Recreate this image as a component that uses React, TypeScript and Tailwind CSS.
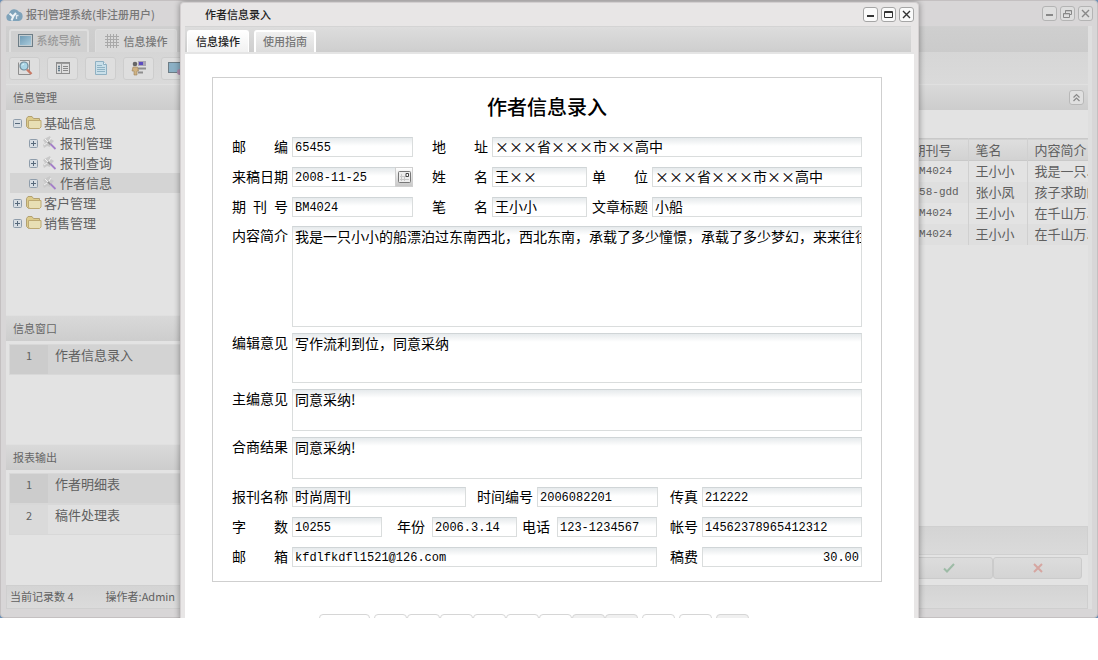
import type { ReactNode } from "react";

const UI_FONT = "font-['Noto_Sans_CJK_SC',sans-serif]";

const TREE = [
  { label: "基础信息", level: 0, open: true, selected: false },
  { label: "报刊管理", level: 1, open: false, selected: false },
  { label: "报刊查询", level: 1, open: false, selected: false },
  { label: "作者信息", level: 1, open: false, selected: true },
  { label: "客户管理", level: 0, open: false, selected: false },
  { label: "销售管理", level: 0, open: false, selected: false },
];

const ROWS = [
  { issue: "BM4024", author: "王小小", intro: "我是一只..." },
  { issue: "258-gdd", author: "张小凤", intro: "孩子求助的" },
  { issue: "BM4024", author: "王小小", intro: "在千山万..." },
  { issue: "BM4024", author: "王小小", intro: "在千山万..." },
];

const PAGER = [
  { name: "记录", className: "w-[51px] mr-1" },
  { name: "首页", className: "w-[33px]" },
  { name: "上一页", className: "w-[33px]" },
  { name: "下一页", className: "w-[33px]" },
  { name: "末页", className: "w-[33px]" },
  { name: "新增", className: "w-[33px]" },
  { name: "修改", className: "w-[33px]" },
  { name: "保存", className: "w-[33px] bg-[#f0f0f0]" },
  { name: "取消", className: "w-[33px] bg-[#f0f0f0]" },
  { name: "查找", className: "w-[33px] ml-1" },
  { name: "打印", className: "w-[33px] ml-1" },
  { name: "退出", className: "w-[33px] ml-1 bg-[#f0f0f0]" },
];

function CloudLogo() {
  return (
    <svg width="17" height="14" viewBox="0 0 17 14" aria-hidden="true">
      <path
        d="M4 13a3.8 3.8 0 0 1-1-7.4A5.5 5.5 0 0 1 13 3.8 4.7 4.7 0 0 1 12.8 13z"
        fill="#7fa3ba"
      />
      <path d="M3.500 5.500l3.500 3L10 5M7.500 8L5.500 12.500" stroke="#eef3f6" strokeWidth="2" fill="none" />
      <path d="M12.500 7.500h-2v3.500" stroke="#dfe8ee" strokeWidth="1.300" fill="none" />
    </svg>
  );
}

function MonitorIcon() {
  return (
    <svg width="15" height="13" viewBox="0 0 15 13" aria-hidden="true">
      <defs>
        <linearGradient id="screen" x1="0" y1="0" x2="1" y2="1">
          <stop offset="0" stopColor="#6f9bb5" />
          <stop offset="1" stopColor="#a9cbdc" />
        </linearGradient>
      </defs>
      <rect x=".5" y=".5" width="14" height="12" fill="#c3ccd0" stroke="#6d7d86" />
      <rect x="2" y="2" width="11" height="9" fill="url(#screen)" />
    </svg>
  );
}

function GridIcon() {
  return (
    <svg width="14" height="14" viewBox="0 0 14 14" aria-hidden="true">
      <path
        d="M2.500 0v14M5.500 0v14M8.500 0v14M11.500 0v14M0 2.500h14M0 5.500h14M0 8.500h14M0 11.500h14"
        stroke="#a9a9a9"
        fill="none"
      />
    </svg>
  );
}

function SearchIcon() {
  return (
    <svg width="16" height="16" viewBox="0 0 16 16" aria-hidden="true">
      <path d="M1.500 2.500v12h12M3 .5h9.500v12" stroke="#8e8e8e" fill="none" />
      <circle cx="7" cy="6" r="4" fill="#a9d5e6" stroke="#6f8b9a" strokeWidth="1.200" />
      <path d="M5 5.500a2.500 2.500 0 0 1 2-1.500" stroke="#e5f5fb" fill="none" />
      <path d="M10 9.500l4.500 4.500" stroke="#c87965" strokeWidth="2.400" />
    </svg>
  );
}

function ListIcon() {
  return (
    <svg width="14" height="12" viewBox="0 0 14 12" aria-hidden="true">
      <rect x=".5" y=".5" width="13" height="11" fill="#dedede" stroke="#8d8d8d" />
      <path d="M1 1.500h12" stroke="#9b9b9b" />
      <path d="M2 4.500h2M2 6.500h2M2 8.500h2" stroke="#637b8a" strokeWidth="1.300" />
      <path d="M5.500 2v9" stroke="#9b9b9b" />
      <path d="M7 4.500h5M7 6.500h5M7 8.500h5" stroke="#888" />
    </svg>
  );
}

function DocumentIcon() {
  return (
    <svg width="14" height="16" viewBox="0 0 14 16" aria-hidden="true">
      <path d="M1.500 1.500h8l3 3v10h-11z" fill="#c9dfe9" stroke="#8fb0c2" />
      <path d="M9.500 1.500v3h3" fill="#e7f1f5" stroke="#8fb0c2" />
      <path d="M3 5.500h5M3 7.500h8M3 9.500h8M3 11.500h8" stroke="#8fb3c4" />
    </svg>
  );
}

function UserIcon() {
  return (
    <svg width="16" height="16" viewBox="0 0 16 16" aria-hidden="true">
      <rect x="7" y="1" width="8" height="5" fill="#a9a5b3" />
      <rect x="8" y="2" width="4" height="3" fill="#5c4cc0" />
      <path d="M7 8.500h8M7 12.500h5" stroke="#8e8e8e" strokeWidth="2" />
      <circle cx="4" cy="4" r="2.300" fill="#666" />
      <path d="M2 7h4.500l1 4H6v4H3v-4H1z" fill="#cfb283" stroke="#9c8259" strokeWidth=".6" />
    </svg>
  );
}

function ScreenUserIcon() {
  return (
    <svg width="17" height="16" viewBox="0 0 17 16" aria-hidden="true">
      <rect x=".5" y="2.500" width="14" height="10" fill="#8bb0c5" stroke="#6d7d86" />
      <circle cx="12" cy="12" r="3" fill="#b18fb0" />
    </svg>
  );
}

function FolderIcon() {
  return (
    <svg width="16" height="14" viewBox="0 0 16 14" aria-hidden="true">
      <path d="M.5 10.500v-8l1.500-2h4l1.500 2h6v9l-1 1h-10z" fill="#dccb8b" stroke="#b3a172" />
      <path d="M2.500 11V4.500h12.500v6.500l-1.500 1.500H3.500z" fill="#e8dfb4" stroke="#bda973" />
    </svg>
  );
}

function WandIcon() {
  return (
    <svg width="15" height="14" viewBox="0 0 15 14" aria-hidden="true">
      <path d="M1 4l3-2 4-2 1 3 3 2-3 3-1 3-3-1-3 2-1-3 2-2z" fill="#c9c9c9" />
      <path d="M3 3l3 3M9 2L7 5M2 9l3-2" stroke="#f1f1f1" />
      <path d="M6 6l2.500 2.500" stroke="#8d8d8d" strokeWidth="1.600" />
      <path d="M8.500 8l5 5" stroke="#a57fc9" strokeWidth="1.800" />
    </svg>
  );
}

function Toggle({ open }: { open: boolean }) {
  return (
    <svg width="9" height="9" viewBox="0 0 9 9" aria-hidden="true">
      <rect x=".5" y=".5" width="8" height="8" rx="1" fill="#d7dde3" stroke="#8f9dab" />
      <path d={open ? "M2 4.500h5" : "M2 4.500h5M4.500 2v5"} stroke="#57697b" />
    </svg>
  );
}

function WindowControls({ dimmed = false }: { dimmed?: boolean }) {
  const button = dimmed
    ? "flex size-[15px] items-center justify-center rounded-[3px] border border-[#b4b4b4] bg-[#dedede] text-[#888]"
    : "flex size-[15px] items-center justify-center rounded-[3px] border border-[#a5a5a5] bg-[#fafafa] text-[#333]";
  return (
    <div className="flex gap-[3px]">
      <button type="button" aria-label="最小化" className={button}>
        <svg width="9" height="9" viewBox="0 0 9 9">
          <path d="M1 6h7" stroke="currentColor" strokeWidth="2" />
        </svg>
      </button>
      <button type="button" aria-label={dimmed ? "还原" : "最大化"} className={button}>
        <svg width="9" height="9" viewBox="0 0 9 9">
          {dimmed ? (
            <path
              d="M2.500 4V1.500h6v4H7M2.500 1.800h6M.5 4.500h6v4h-6zM.5 4.800h6"
              stroke="currentColor"
              fill="none"
            />
          ) : (
            <path d="M.5 1.500h8v6h-8zM.5 2.500h8" stroke="currentColor" fill="none" />
          )}
        </svg>
      </button>
      <button type="button" aria-label="关闭" className={button}>
        <svg width="9" height="9" viewBox="0 0 9 9">
          <path d="M1 1l7 7M8 1L1 8" stroke="currentColor" strokeWidth="1.400" />
        </svg>
      </button>
    </div>
  );
}

function SectionTitle({ children }: { children: ReactNode }) {
  return (
    <h2 className="flex h-[26px] shrink-0 items-center border-t border-[#e0e0e0] bg-linear-to-b from-[#d9d9d9] to-[#cdcdcd] pl-[7px] text-[11px] text-[#666]">
      {children}
    </h2>
  );
}

function NumberedList({ items }: { items: string[] }) {
  return (
    <ol className="ml-[3px] pt-[3px] text-[13px] text-[#606060]">
      {items.map((item, i) => (
        <li
          key={item}
          className={`flex h-[31px] border border-[#d8d8d8] ${i === 0 ? "bg-[#d3d3d3]" : "bg-[#e0e0e0]"}`}
        >
          <span
            className={`w-[38px] pt-[2px] text-center text-[11px] leading-4 ${i === 0 ? "bg-[#cccccc]" : "bg-[#dadada]"}`}
          >
            {i + 1}
          </span>
          <span className="pl-[7px] leading-5">{item}</span>
        </li>
      ))}
    </ol>
  );
}

function Sidebar() {
  return (
    <aside className="flex w-[200px] shrink-0 flex-col bg-[#e3e3e3]">
      <SectionTitle>信息管理</SectionTitle>
      <ul className="min-h-[205px] pt-[3px] pl-1 text-[13px] text-[#606060]">
        {TREE.map((node) => (
          <li
            key={node.label}
            className={`flex h-5 items-center ${node.level ? "pl-[19px]" : "pl-[3px]"} ${node.selected ? "bg-[#d4d4d4]" : ""}`}
          >
            <Toggle open={node.open} />
            <span className={node.level ? "mr-[3px] ml-1" : "mr-[2px] ml-1"}>
              {node.level ? <WandIcon /> : <FolderIcon />}
            </span>
            {node.label}
          </li>
        ))}
      </ul>
      <SectionTitle>信息窗口</SectionTitle>
      <div className="min-h-[103px]">
        <NumberedList items={["作者信息录入"]} />
      </div>
      <SectionTitle>报表输出</SectionTitle>
      <div className="min-h-[115px]">
        <NumberedList items={["作者明细表", "稿件处理表"]} />
      </div>
    </aside>
  );
}

function RecordList() {
  const cell = "overflow-hidden border-l border-[#d0d0d0] pl-[7px] text-left font-normal whitespace-nowrap";
  return (
    <main className="flex min-w-0 flex-1 flex-col bg-[#e3e3e3]">
      <div className="flex h-[26px] items-center justify-end border-t border-[#e0e0e0] bg-linear-to-b from-[#d9d9d9] to-[#cdcdcd] pr-1">
        <button
          type="button"
          aria-label="折叠"
          className="flex size-[15px] items-center justify-center rounded-[3px] border border-[#b8b8b8] bg-[#e0e0e0]"
        >
          <svg width="9" height="9" viewBox="0 0 9 9">
            <path d="M1.500 4.500l3-3 3 3M1.500 8l3-3 3 3" stroke="#888" strokeWidth="1.200" fill="none" />
          </svg>
        </button>
      </div>
      <div className="mt-7">
        <table className="w-full table-fixed border-collapse text-[13px] text-[#606060]">
          <thead>
            <tr className="h-[22px] border-y border-[#c9c9c9] bg-linear-to-b from-[#dedede] to-[#d2d2d2] leading-5">
              <th />
              <th className={`w-[63px] ${cell}`}>期刊号</th>
              <th className={`w-[59px] ${cell}`}>笔名</th>
              <th className={`w-[61px] ${cell}`}>内容简介</th>
            </tr>
          </thead>
          <tbody>
            {ROWS.map((row, i) => (
              <tr key={i} className="h-[21px] leading-5 even:bg-[#dfdfdf]">
                <td />
                <td className={`font-['Liberation_Mono',monospace] text-[11px] ${cell}`}>{row.issue}</td>
                <td className={cell}>{row.author}</td>
                <td className={cell}>{row.intro}</td>
              </tr>
            ))}
          </tbody>
        </table>
      </div>
      <div className="mt-auto h-[29px] border border-[#d0d0d0] bg-linear-to-b from-[#d4d4d4] to-[#dadada]" />
      <div className="mt-[2px] mr-[6px] mb-[6px] flex h-[22px] justify-end">
        <button
          type="button"
          aria-label="确定"
          className="flex w-[89px] items-center justify-center rounded-[3px] border border-[#cbcbcb] bg-linear-to-b from-[#dcdcdc] to-[#d4d4d4]"
        >
          <svg width="12" height="10" viewBox="0 0 12 10">
            <path d="M1 5.500l3 3L11 1" stroke="#9dbba6" strokeWidth="2" fill="none" />
          </svg>
        </button>
        <button
          type="button"
          aria-label="取消"
          className="flex w-[89px] items-center justify-center rounded-[3px] border border-[#cbcbcb] bg-linear-to-b from-[#dcdcdc] to-[#d4d4d4]"
        >
          <svg width="10" height="10" viewBox="0 0 10 10">
            <path d="M1 1l8 8M9 1L1 9" stroke="#d6a6a1" strokeWidth="2" fill="none" />
          </svg>
        </button>
      </div>
    </main>
  );
}

const BOX =
  "border border-[#dadddd] border-t-[#d0d5d7] bg-white bg-[linear-gradient(to_bottom,#e6eaec,#ffffff_8px)] px-[2px] text-black outline-none";

type FieldProps = {
  id: string;
  label: string;
  value: string;
  labelClass?: string;
  inputClass?: string;
  mono?: boolean;
  date?: boolean;
};

function Field({ id, label, value, labelClass = "w-14", inputClass = "flex-1", mono, date }: FieldProps) {
  return (
    <>
      <label htmlFor={id} className={`flex shrink-0 justify-between leading-[18px] ${labelClass}`}>
        {label.split(" ").map((part) => (
          <span key={part}>{part}</span>
        ))}
      </label>
      <div className={`ml-1 flex h-5 min-w-0 items-stretch ${inputClass}`}>
        <input
          id={id}
          defaultValue={value}
          className={`w-full min-w-0 ${BOX} ${mono ? "pt-[2px] font-['Liberation_Mono',monospace] text-xs" : "pb-[2px] text-sm"} ${id === "fee" ? "text-right" : ""} ${date ? "border-r-0" : ""}`}
        />
        {date && (
          <button
            type="button"
            aria-label="选择日期"
            className="flex w-[18px] shrink-0 items-center justify-center border border-[#d0d0d0] bg-linear-to-b from-white to-[#c8c8c8]"
          >
            <svg width="13" height="12" viewBox="0 0 13 12">
              <rect x=".5" y=".5" width="12" height="11" rx="1" fill="#eee" stroke="#777" />
              <path d="M3.500 3v7M6.500 5v5M2 5.500h6M2 8.500h9" stroke="#c8c8c8" />
              <path d="M8 2.500h2.500v3H8z" fill="#fff" stroke="#444" />
            </svg>
          </button>
        )}
      </div>
    </>
  );
}

function Note({ id, label, value, className }: { id: string; label: string; value: string; className: string }) {
  return (
    <div className="flex items-start">
      <label htmlFor={id} className="w-14 shrink-0 leading-[18px]">
        {label}
      </label>
      <textarea
        id={id}
        defaultValue={value}
        wrap="off"
        className={`ml-1 block min-w-0 flex-1 resize-none overflow-hidden text-sm leading-[18px] ${BOX} ${className}`}
      />
    </div>
  );
}

function AuthorForm() {
  return (
    <form className="mt-[23px] mr-8 ml-[27px] border border-[#cfcfcf] px-[19px] pt-[17px] pb-[14px] text-sm text-black">
      <h1 className="text-center text-xl leading-6 font-medium">作者信息录入</h1>
      <div className="mt-[18px] flex flex-col gap-[10px]">
        <div className="flex">
          <Field id="zip" label="邮 编" value="65455" inputClass="w-[121px]" mono />
          <Field id="address" label="地 址" value="×××省×××市××高中" labelClass="ml-[19px] w-14" />
        </div>
        <div className="flex">
          <Field id="date" label="来稿日期" value="2008-11-25" inputClass="w-[121px]" mono date />
          <Field id="name" label="姓 名" value="王××" labelClass="ml-[19px] w-14" inputClass="w-[95px]" />
          <Field id="unit" label="单 位" value="×××省×××市××高中" labelClass="ml-[5px] w-14" />
        </div>
        <div className="flex">
          <Field id="issue" label="期 刊 号" value="BM4024" inputClass="w-[121px]" mono />
          <Field id="pen" label="笔 名" value="王小小" labelClass="ml-[19px] w-14" inputClass="w-[95px]" />
          <Field id="article" label="文章标题" value="小船" labelClass="ml-[5px] w-14" />
        </div>
      </div>
      <div className="mt-[9px] flex flex-col gap-[6px]">
        <Note
          id="intro"
          label="内容简介"
          className="h-[101px]"
          value="我是一只小小的船漂泊过东南西北，西北东南，承载了多少憧憬，承载了多少梦幻，来来往往"
        />
        <Note id="editor" label="编辑意见" className="h-[50px]" value="写作流利到位，同意采纳" />
        <Note id="chief" label="主编意见" className="h-[42px]" value="同意采纳!" />
        <Note id="result" label="合商结果" className="h-[42px]" value="同意采纳!" />
      </div>
      <div className="mt-2 flex flex-col gap-[10px]">
        <div className="flex">
          <Field id="journal" label="报刊名称" value="时尚周刊" inputClass="w-[174px]" />
          <Field id="time" label="时间编号" value="2006082201" labelClass="ml-[11px] w-14" inputClass="w-[121px]" mono />
          <Field id="fax" label="传真" value="212222" labelClass="ml-3 w-7" mono />
        </div>
        <div className="flex">
          <Field id="words" label="字 数" value="10255" inputClass="w-[90px]" mono />
          <Field id="year" label="年份" value="2006.3.14" labelClass="ml-[15px] w-[31px]" inputClass="w-[85px]" mono />
          <Field id="phone" label="电话" value="123-1234567" labelClass="ml-[5px] w-[31px]" inputClass="w-[100px]" mono />
          <Field id="account" label="帐号" value="14562378965412312" labelClass="ml-[13px] w-7" mono />
        </div>
        <div className="flex">
          <Field id="email" label="邮 箱" value="kfdlfkdfl1521@126.com" inputClass="w-[365px]" mono />
          <Field id="fee" label="稿费" value="30.00" labelClass="ml-[13px] w-7" mono />
        </div>
      </div>
    </form>
  );
}

function AuthorDialog() {
  return (
    <section
      role="dialog"
      aria-label="作者信息录入"
      className="absolute top-[2px] right-[179px] left-[180px] h-full rounded-t-[4px] border-x border-t border-[#d3cfd0] bg-[#e8e6e6] px-1 shadow-[0_0_6px_rgba(0,0,0,0.4)]"
    >
      <header className="flex h-[23px] items-center justify-between pl-5 text-[11px] font-medium text-[#222]">
        作者信息录入
        <WindowControls />
      </header>
      <div className="mr-[3px] flex h-[26px] items-end border-t border-[#d4d4d4] bg-linear-to-b from-[#dddddd] to-[#cecece] pl-[2px] text-[11px] font-medium">
        <button
          type="button"
          className="h-[22px] w-[62px] rounded-t-[3px] border border-b-0 border-white bg-linear-to-b from-white to-[#f1f1f1] text-[#222]"
        >
          信息操作
        </button>
        <button
          type="button"
          className="ml-[5px] h-[22px] w-[62px] rounded-t-[3px] border-2 border-b-0 border-white bg-linear-to-b from-[#f0f0f0] to-[#dcdcdc] pb-[2px] text-[#777]"
        >
          使用指南
        </button>
      </div>
      <div className="h-full overflow-hidden border-t-2 border-[#e5e5e5] bg-white">
        <AuthorForm />
        <div className="mt-8 mr-8 flex justify-center">
          {PAGER.map((item) => (
            <button
              key={item.name}
              type="button"
              aria-label={item.name}
              className={`h-6 rounded-[4px] border border-[#d6d6d6] ${item.className}`}
            />
          ))}
        </div>
      </div>
    </section>
  );
}

export default function App() {
  const tool =
    "flex h-[23px] w-[31px] items-center justify-center rounded-[3px] border border-[#cdcdcd] bg-[#dedede]";
  return (
    <div className={`min-h-screen bg-white ${UI_FONT}`}>
      <div className="relative overflow-hidden bg-[#6b8fb5]">
        <div className="rounded-[4px] border border-[#c4c0c1] bg-[#d8d6d7] px-[5px] pb-2">
          <header className="flex h-[25px] items-center justify-between text-[11px] text-[#777]">
            <div className="flex items-center gap-[3px] pt-[2px] font-medium">
              <CloudLogo />
              报刊管理系统(非注册用户)
            </div>
            <div className="-mr-[1px]">
              <WindowControls dimmed />
            </div>
          </header>
          <div className="border-r-4 border-[#dfdfdf]">
            <nav className="flex h-[26px] items-end border-t border-[#d0d0d0] bg-linear-to-b from-[#cfcfcf] to-[#cbcbcb] pl-[3px] text-[11px]">
              <button
                type="button"
                className="flex h-[23px] w-20 items-center justify-center gap-1 rounded-t-[3px] border-2 border-b-0 border-[#dedede] bg-[#d0d0d0] pb-[2px] font-medium text-[#999]"
              >
                <MonitorIcon />
                系统导航
              </button>
              <button
                type="button"
                className="ml-[6px] flex h-[23px] w-[82px] items-center justify-center gap-[5px] rounded-t-[3px] border border-b-0 border-[#dedede] bg-[#d9d9d9] font-medium text-[#777]"
              >
                <GridIcon />
                信息操作
              </button>
            </nav>
            <div className="flex h-8 items-center gap-[7px] bg-linear-to-b from-[#d6d6d6] to-[#dadada] pl-[3px]">
              <button type="button" aria-label="查找" className={tool}>
                <SearchIcon />
              </button>
              <button type="button" aria-label="列表" className={tool}>
                <ListIcon />
              </button>
              <button type="button" aria-label="文档" className={tool}>
                <DocumentIcon />
              </button>
              <button type="button" aria-label="用户" className={tool}>
                <UserIcon />
              </button>
              <button type="button" aria-label="系统" className={tool}>
                <ScreenUserIcon />
              </button>
            </div>
            <div className="flex">
              <Sidebar />
              <RecordList />
            </div>
            <footer className="flex h-6 items-center gap-8 border border-[#cfcfcf] bg-linear-to-b from-[#d4d4d4] to-[#dbdbdb] pb-[2px] pl-[3px] text-[11px] text-[#606060]">
              <span>当前记录数 4</span>
              <span>操作者:Admin</span>
            </footer>
          </div>
        </div>
        <AuthorDialog />
      </div>
    </div>
  );
}
